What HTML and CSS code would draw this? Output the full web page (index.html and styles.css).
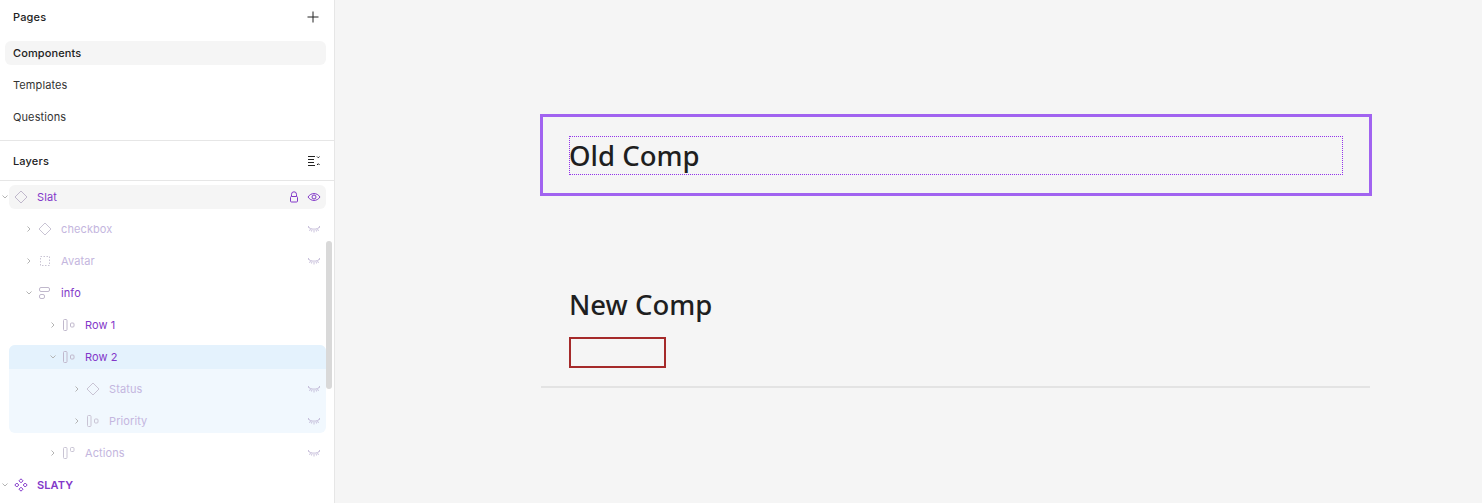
FILE: index.html
```html
<!DOCTYPE html>
<html lang="en">
<head>
    <meta charset="UTF-8">
    <meta name="viewport" content="width=device-width, initial-scale=1.0">
    <title>Old Comp</title>
    <link rel="stylesheet" href="styles.css">
</head>
<body>
    <svg class="sprite" width="0" height="0">
        <symbol id="chev-right" viewBox="0 0 8 8"><path d="M2.500 1.500l2.500 2.500-2.500 2.500" fill="none" stroke="currentColor"/></symbol>
        <symbol id="chev-down" viewBox="0 0 8 8"><path d="M1.500 2.500l2.500 2.500 2.500-2.500" fill="none" stroke="currentColor"/></symbol>
        <symbol id="diamond" viewBox="0 0 14 14"><path d="M7 1L13 7 7 13 1 7z" fill="none" stroke="currentColor"/></symbol>
        <symbol id="dashed" viewBox="0 0 14 14"><rect x="2.500" y="2.500" width="9" height="9" fill="none" stroke="currentColor" stroke-dasharray="1.500 1.500"/></symbol>
        <symbol id="stack" viewBox="0 0 14 14"><rect x="1.500" y="1.500" width="10" height="4" rx="1.500" fill="none" stroke="currentColor"/><rect x="1.500" y="8.500" width="5" height="4" rx="1.500" fill="none" stroke="currentColor"/></symbol>
        <symbol id="row" viewBox="0 0 14 14"><rect x="1.500" y="1.500" width="3.500" height="11" rx="1" fill="none" stroke="currentColor"/><rect x="8.500" y="5" width="3.500" height="4" rx="1" fill="none" stroke="currentColor"/></symbol>
        <symbol id="row-top" viewBox="0 0 14 14"><rect x="1.500" y="1.500" width="3.500" height="11" rx="1" fill="none" stroke="currentColor"/><rect x="8.500" y="1.500" width="3.500" height="4" rx="1" fill="none" stroke="currentColor"/></symbol>
        <symbol id="set" viewBox="0 0 14 14"><g fill="none" stroke="currentColor"><path d="M7 .8L9 2.800 7 4.800 5 2.800z"/><path d="M7 9.200L9 11.200 7 13.200 5 11.200z"/><path d="M2.800 5L4.800 7 2.800 9 .8 7z"/><path d="M11.200 5L13.200 7 11.200 9 9.200 7z"/></g></symbol>
        <symbol id="lashes" viewBox="0 0 14 8"><path d="M1 2c3 2.800 9 2.800 12 0M1 1l1.500 1.500M13 1l-1.500 1.500M3.500 4L2.500 6M7 5v2.500M10.500 4l1 2M5 4.500l-.5 2M9 4.500l.5 2" fill="none" stroke="currentColor" stroke-width=".8"/></symbol>
    </svg>

    <div class="sidebar">
        <div class="panel-head">
            <span class="panel-title">Pages</span>
            <svg class="head-icon" viewBox="0 0 12 12"><path d="M6 .5v11M.5 6h11" stroke="#222" fill="none"/></svg>
        </div>
        <div class="pages">
            <div class="page active">Components</div>
            <div class="page">Templates</div>
            <div class="page">Questions</div>
        </div>

        <div class="panel-head layers-head">
            <span class="panel-title">Layers</span>
            <svg class="head-icon" viewBox="0 0 12 12"><path d="M0 1.500h7M0 4.500h6M0 7.500h6M0 10.500h7M9 1.500l1.300 1.300 1.300-1.300M9 10l1.300-1.300 1.300 1.300" stroke="#222" fill="none"/></svg>
        </div>

        <div class="tree">
            <div class="row row-top depth-0">
                <svg class="chev"><use href="#chev-down"/></svg>
                <svg class="ico"><use href="#diamond"/></svg>
                <span class="name">Slat</span>
                <svg class="lock" viewBox="0 0 12 12"><path d="M3.500 5.500V3.300a2.500 2.500 0 0 1 5 0V5.500" fill="none" stroke="currentColor"/><rect x="2.500" y="5.500" width="7" height="5.500" rx="1" fill="none" stroke="currentColor"/></svg>
                <svg class="eye" viewBox="0 0 14 10"><path d="M1 5c3-4.600 9-4.600 12 0-3 4.600-9 4.600-12 0z" fill="none" stroke="currentColor"/><circle cx="7" cy="5" r="2" fill="none" stroke="currentColor"/></svg>
            </div>
            <div class="row faded depth-1">
                <svg class="chev"><use href="#chev-right"/></svg>
                <svg class="ico"><use href="#diamond"/></svg>
                <span class="name">checkbox</span>
                <svg class="lash"><use href="#lashes"/></svg>
            </div>
            <div class="row faded depth-1">
                <svg class="chev"><use href="#chev-right"/></svg>
                <svg class="ico"><use href="#dashed"/></svg>
                <span class="name">Avatar</span>
                <svg class="lash"><use href="#lashes"/></svg>
            </div>
            <div class="row depth-1">
                <svg class="chev"><use href="#chev-down"/></svg>
                <svg class="ico"><use href="#stack"/></svg>
                <span class="name">info</span>
            </div>
            <div class="row depth-2">
                <svg class="chev"><use href="#chev-right"/></svg>
                <svg class="ico"><use href="#row"/></svg>
                <span class="name">Row 1</span>
            </div>
            <div class="group">
                <div class="row group-head depth-2">
                    <svg class="chev"><use href="#chev-down"/></svg>
                    <svg class="ico"><use href="#row"/></svg>
                    <span class="name">Row 2</span>
                </div>
                <div class="row faded depth-3">
                    <svg class="chev"><use href="#chev-right"/></svg>
                    <svg class="ico"><use href="#diamond"/></svg>
                    <span class="name">Status</span>
                    <svg class="lash"><use href="#lashes"/></svg>
                </div>
                <div class="row faded depth-3">
                    <svg class="chev"><use href="#chev-right"/></svg>
                    <svg class="ico"><use href="#row"/></svg>
                    <span class="name">Priority</span>
                    <svg class="lash"><use href="#lashes"/></svg>
                </div>
            </div>
            <div class="row faded depth-2">
                <svg class="chev"><use href="#chev-right"/></svg>
                <svg class="ico"><use href="#row-top"/></svg>
                <span class="name">Actions</span>
                <svg class="lash"><use href="#lashes"/></svg>
            </div>
            <div class="row depth-0 bold">
                <svg class="chev"><use href="#chev-down"/></svg>
                <svg class="ico"><use href="#set"/></svg>
                <span class="name">SLATY</span>
            </div>
        </div>
        <div class="scrollbar"></div>
    </div>

    <div class="canvas">
        <div class="old-frame">
            <h1 class="old-title">Old Comp</h1>
        </div>
        <div class="new-block">
            <h1 class="new-title">New Comp</h1>
            <div class="red-box"></div>
        </div>
    </div>
</body>
</html>
```

FILE: styles.css
```css
* {
    box-sizing: border-box;
}
html, body {
    height: 100%;
}
body {
    margin: 0;
    display: flex;
    overflow: hidden;
    font-family: Inter, sans-serif;
    font-size: 11px;
    color: #333;
    background-color: #f5f5f5;
}
.sprite {
    position: absolute;
}
.sidebar {
    position: relative;
    width: 335px;
    height: 503px;
    flex: none;
    overflow: hidden;
    background-color: #fff;
    border-right: 1px solid #e6e6e6;
}
.panel-head {
    display: flex;
    align-items: center;
    justify-content: space-between;
    height: 33px;
    padding: 0 15px 0 13px;
}
.panel-title {
    font-weight: 500;
    color: #222;
    letter-spacing: 0.15px;
}
.head-icon {
    width: 12px;
    height: 12px;
}
.pages {
    padding: 8px 8px 11px 5px;
    border-bottom: 1px solid #e6e6e6;
}
.page {
    display: flex;
    align-items: center;
    height: 24px;
    margin-bottom: 8px;
    padding-left: 8px;
    border-radius: 6px;
    letter-spacing: 0.1px;
}
.page:last-child {
    margin-bottom: 0;
}
.page.active {
    background-color: #f5f5f5;
    font-weight: 500;
    color: #222;
}
.layers-head {
    height: 40px;
    padding-right: 14px;
    border-bottom: 1px solid #e6e6e6;
}
.tree {
    padding: 4px 8px 0 9px;
}
.row {
    display: flex;
    align-items: center;
    height: 24px;
    margin-bottom: 8px;
    color: #8338c9;
    letter-spacing: 0.1px;
}
.depth-0 { padding-left: 0; }
.depth-1 { padding-left: 24px; }
.depth-2 { padding-left: 48px; }
.depth-3 { padding-left: 72px; }
.row-top {
    background-color: #f5f5f5;
    border-radius: 6px;
}
.chev {
    width: 8px;
    height: 8px;
    margin-left: -8px;
    color: #b4b4b4;
    flex: none;
}
.ico {
    width: 14px;
    height: 14px;
    margin: 0 9px 0 5px;
    flex: none;
    color: #c0b8cc;
}
.name {
    flex: 1;
}
.faded .name {
    color: #c4b6de;
}
.faded .ico {
    color: #c9c4d4;
}
.bold {
    font-weight: 600;
}
.bold .ico {
    color: #8338c9;
}
.lock {
    width: 12px;
    height: 12px;
    margin-right: 7px;
}
.eye {
    width: 14px;
    height: 10px;
    margin-right: 5px;
}
.lash {
    width: 14px;
    height: 8px;
    margin-right: 5px;
    color: #bdb3d3;
}
.group {
    margin-bottom: 8px;
    border-radius: 6px;
    overflow: hidden;
    background-color: #f1f8fe;
}
.group .row:last-child {
    margin-bottom: 0;
}
.group-head {
    background-color: #e4f2fd;
}
.scrollbar {
    position: absolute;
    top: 241px;
    left: 326px;
    width: 6px;
    height: 148px;
    border-radius: 3px;
    background-color: #d9d9d9;
}
.canvas {
    flex: 1;
    padding: 114px 0 0 205px;
    font-family: "Noto Sans", "Open Sans", sans-serif;
    color: #1f1f1f;
}
.old-frame {
    width: 832px;
    height: 82px;
    padding: 20px 27px 19px 27px;
    border: 3px solid #a163f0;
}
.old-title,
.new-title {
    margin: 0;
    font-size: 27.5px;
    font-weight: 500;
    line-height: 37px;
}
.old-title {
    height: 37px;
    text-indent: -1px;
    outline: 1px dotted #9333ea;
}
.new-block {
    width: 829px;
    margin: 90px 0 0 1px;
    padding: 0 0 18px 28px;
    border-bottom: 2px solid #e3e3e3;
}
.new-title {
    line-height: 38px;
}
.red-box {
    width: 97px;
    height: 31px;
    margin-top: 13px;
    border: 2px solid #a52a2a;
}
```
